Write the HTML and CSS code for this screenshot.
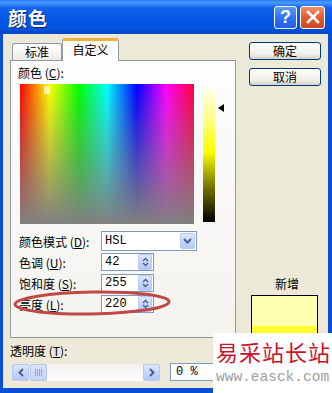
FILE: index.html
```html
<!DOCTYPE html>
<html>
<head>
    <meta charset="utf-8">
    <title>颜色</title>
    <link rel="stylesheet" href="styles.css">
</head>
<body>
<div class="window">
    <div class="titlebar">
        <span class="title">颜色</span>
        <div class="title-buttons">
            <span class="tb-btn help">?</span>
            <span class="tb-btn close">
                <svg width="14" height="14" viewBox="0 0 14 14"><path d="M2 2 L12 12 M12 2 L2 12" stroke="#fff" stroke-width="2.6" stroke-linecap="square"/></svg>
            </span>
        </div>
    </div>
    <div class="frame">
        <div class="left-col">
            <div class="tabs">
                <span class="tab">标准</span>
                <span class="tab active">自定义</span>
            </div>
            <div class="panel">
                <div class="label">颜色 (<u>C</u>):</div>
                <div class="picker">
                    <div class="spectrum"><span class="cross"></span></div>
                    <div class="lum"></div>
                    <div class="lum-arrow"></div>
                </div>
                <div class="form">
                    <div class="row">
                        <span class="row-label">颜色模式 (<u>D</u>):</span>
                        <div class="select">
                            <span class="value">HSL</span>
                            <span class="drop-btn">
                                <svg width="9" height="6" viewBox="0 0 9 6"><path d="M1 1 L4.5 4.5 L8 1" stroke="#4d6185" stroke-width="2" fill="none"/></svg>
                            </span>
                        </div>
                    </div>
                    <div class="row">
                        <span class="row-label">色调 (<u>U</u>):</span>
                        <div class="spin"><span class="value">42</span><span class="spin-btn"><svg width="7" height="10" viewBox="0 0 7 10"><path d="M1 4 L3.5 1.5 L6 4 M1 6 L3.5 8.5 L6 6" stroke="#4d6185" stroke-width="1.4" fill="none"/></svg></span></div>
                    </div>
                    <div class="row">
                        <span class="row-label">饱和度 (<u>S</u>):</span>
                        <div class="spin"><span class="value">255</span><span class="spin-btn"><svg width="7" height="10" viewBox="0 0 7 10"><path d="M1 4 L3.5 1.5 L6 4 M1 6 L3.5 8.5 L6 6" stroke="#4d6185" stroke-width="1.4" fill="none"/></svg></span></div>
                    </div>
                    <div class="row">
                        <span class="row-label">亮度 (<u>L</u>):</span>
                        <div class="spin"><span class="value">220</span><span class="spin-btn"><svg width="7" height="10" viewBox="0 0 7 10"><path d="M1 4 L3.5 1.5 L6 4 M1 6 L3.5 8.5 L6 6" stroke="#4d6185" stroke-width="1.4" fill="none"/></svg></span></div>
                    </div>
                </div>
            </div>
            <div class="label trans-label">透明度 (<u>T</u>):</div>
            <div class="trans-row">
                <div class="scrollbar">
                    <span class="sb-btn"><svg width="6" height="9" viewBox="0 0 6 9"><path d="M5 1 L1.5 4.5 L5 8" stroke="#4d6185" stroke-width="2" fill="none"/></svg></span>
                    <span class="sb-thumb"><i></i><i></i><i></i><i></i></span>
                    <span class="sb-track"></span>
                    <span class="sb-btn"><svg width="6" height="9" viewBox="0 0 6 9"><path d="M1 1 L4.5 4.5 L1 8" stroke="#4d6185" stroke-width="2" fill="none"/></svg></span>
                </div>
                <div class="pct">0 %</div>
            </div>
        </div>
        <div class="right-col">
            <button class="btn">确定</button>
            <button class="btn">取消</button>
            <div class="new-label">新增</div>
            <div class="preview">
                <div class="new-color"></div>
                <div class="cur-color"></div>
            </div>
        </div>
    </div>

    <svg class="mark" width="164" height="34" viewBox="0 0 164 34">
        <ellipse cx="80" cy="16" rx="77" ry="11" fill="none" stroke="#c24848" stroke-width="3" transform="rotate(-1 80 16)"/>
    </svg>

    <div class="watermark">
        <div class="wm-cn">易采站长站</div>
        <div class="wm-en">www.easck.com</div>
    </div>
</div>
</body>
</html>
```

FILE: styles.css
```css
body { margin: 0; font-family: "Noto Sans CJK SC", "Liberation Sans", sans-serif; font-size: 12px; color: #000; }

.window {
    position: relative;
    width: 332px;
    height: 393px;
    overflow: hidden;
    background: #ece9d8;
    display: flex;
    flex-direction: column;
}

.titlebar {
    height: 34px;
    flex: none;
    display: flex;
    align-items: center;
    justify-content: space-between;
    padding: 0 7px 0 8px;
    background: linear-gradient(to bottom, #2a78f6 0%, #4a9bff 8%, #1463ec 22%, #0458e4 55%, #0253dc 85%, #0244c4 100%);
}
.title {
    color: #fff;
    font-size: 19px;
    font-weight: bold;
    text-shadow: 1px 1px 0 #0a2470;
    letter-spacing: 1px;
}
.title-buttons { display: flex; gap: 3px; }
.tb-btn {
    width: 21px;
    height: 21px;
    border: 1px solid #fff;
    border-radius: 3px;
    display: flex;
    align-items: center;
    justify-content: center;
}
.help {
    background: linear-gradient(to bottom, #5a9cff, #2a6cf0 60%, #2460e0);
    color: #fff;
    font-family: "Liberation Sans", sans-serif;
    font-weight: bold;
    font-size: 18px;
}
.close {
    width: 23px;
    background: linear-gradient(to bottom, #f0906a, #e0582e 55%, #cf4a22);
}

.frame {
    flex: 1;
    display: flex;
    border-left: 3px solid #0a4ed8;
    border-right: 4px solid #0a4ed8;
    border-bottom: 5px solid #0a4ed8;
}

.left-col { width: 226px; margin-left: 7px; }

.tabs { display: flex; align-items: flex-end; height: 26px; margin-left: 2px; }
.tab {
    box-sizing: border-box;
    width: 50px;
    height: 17px;
    line-height: 16px;
    white-space: nowrap;
    text-align: center;
    border: 1px solid #919b9c;
    border-bottom: none;
    border-radius: 3px 3px 0 0;
    background: linear-gradient(to bottom, #fff, #ecebe6);
}
.tab.active {
    width: 57px;
    height: 23px;
    margin-bottom: -1px;
    position: relative;
    z-index: 1;
    background: #fcfcfe;
    border-top: 3px solid #f0b040;
    line-height: 17px;
}

.panel {
    height: 278px;
    border: 1px solid #919b9c;
    background: linear-gradient(to bottom, #fdfdfe, #f4f3ee);
    padding: 4px 0 0 7px;
    box-sizing: border-box;
}
.label { line-height: 16px; }

.picker { display: flex; margin: 3px 0 0 2px; }
.spectrum {
    position: relative;
    width: 174px;
    height: 140px;
    background:
        linear-gradient(to bottom, rgba(128,128,128,0) 0%, rgba(128,128,128,0.55) 55%, #808080 100%),
        linear-gradient(to right, #ff0000 0%, #ffff00 17%, #00ff00 34%, #00ffff 50%, #0000ff 67%, #ff00ff 84%, #ff0040 100%);
}
.cross {
    position: absolute;
    left: 24px;
    top: 2px;
    width: 6px;
    height: 8px;
    background: #fff8d0;
    opacity: 0.8;
}
.lum {
    width: 12px;
    height: 136px;
    margin: 2px 0 0 9px;
    background: linear-gradient(to bottom, #fffff6 0%, #ffff80 25%, #ffff00 48%, #808000 72%, #000 100%);
}
.lum-arrow {
    width: 0;
    height: 0;
    margin: 20px 0 0 3px;
    border-top: 4px solid transparent;
    border-bottom: 4px solid transparent;
    border-right: 6px solid #000;
}

.form { margin-top: 7px; display: flex; flex-direction: column; gap: 3px; }
.row { display: flex; align-items: center; }
.row:first-child { margin-bottom: -1px; }
.row-label { width: 82px; margin-left: 1px; }

.select, .spin {
    display: flex;
    align-items: center;
    background: #fff;
    border: 1px solid #7f9db9;
    box-sizing: border-box;
    font-family: "Liberation Mono", monospace;
    font-size: 12px;
}
.select { width: 96px; height: 20px; justify-content: space-between; }
.spin { width: 53px; height: 18px; justify-content: space-between; }
.value { padding-left: 3px; }
.drop-btn, .spin-btn, .sb-btn {
    display: flex;
    align-items: center;
    justify-content: center;
    background: linear-gradient(to bottom, #dde6fc, #c1d3fb 60%, #b4c8f6);
    border: 1px solid #b9c9ef;
    border-radius: 2px;
    box-sizing: border-box;
}
.drop-btn { width: 15px; height: 16px; margin-right: 1px; }
.spin-btn { width: 14px; height: 16px; margin-right: 1px; }

.trans-label { margin: 5px 0 0 0; }
.trans-row { display: flex; align-items: center; margin-top: 4px; }
.scrollbar {
    display: flex;
    width: 148px;
    height: 17px;
    margin-left: 2px;
}
.sb-btn { width: 17px; height: 17px; flex: none; }
.sb-thumb {
    width: 17px;
    flex: none;
    margin-left: 1px;
    display: flex;
    align-items: center;
    justify-content: center;
    gap: 1px;
    background: linear-gradient(to bottom, #d8e2fc, #c6d4fa);
    border: 1px solid #b8c8ef;
    border-radius: 2px;
    box-sizing: border-box;
}
.sb-thumb i { width: 1px; height: 7px; background: #8ca4e0; }
.sb-track { flex: 1; background: linear-gradient(to bottom, #f3f1ec, #fefefe); }
.pct {
    width: 60px;
    height: 18px;
    margin-left: 10px;
    background: #fff;
    border: 1px solid #7f9db9;
    box-sizing: border-box;
    font-family: "Liberation Mono", monospace;
    line-height: 16px;
    padding-left: 5px;
}

.right-col {
    margin-left: 13px;
    width: 72px;
    padding-top: 8px;
    display: flex;
    flex-direction: column;
}
.btn {
    height: 18px;
    width: 72px;
    margin-bottom: 8px;
    padding: 0;
    font-family: "Noto Sans CJK SC", sans-serif;
    font-size: 12px;
    line-height: 14px;
    border: 1px solid #003c74;
    border-radius: 3px;
    background: linear-gradient(to bottom, #fff, #f0f0ea 70%, #d6d0c5);
}
.new-label { margin-top: 183px; text-align: center; line-height: 14px; padding-left: 4px; }
.preview {
    width: 67px;
    height: 70px;
    margin: 4px 0 0 2px;
    border: 1px solid #000;
    box-sizing: border-box;
    display: flex;
    flex-direction: column;
}
.new-color { height: 30px; background: #ffffb0; }
.cur-color { flex: 1; background: #ffff30; }

.mark { position: absolute; left: 12px; top: 287px; }

.watermark {
    position: absolute;
    left: 213px;
    top: 333px;
    width: 119px;
    height: 60px;
    background: #fff;
    padding-left: 3px;
    box-sizing: border-box;
}
.wm-cn {
    color: #c8142c;
    font-size: 22px;
    line-height: 30px;
    letter-spacing: 1px;
    margin-top: 3px;
}
.wm-en {
    color: #a0a0a0;
    font-family: "Liberation Mono", monospace;
    font-size: 14.5px;
    line-height: 18px;
    margin-top: 2px;
}
```
